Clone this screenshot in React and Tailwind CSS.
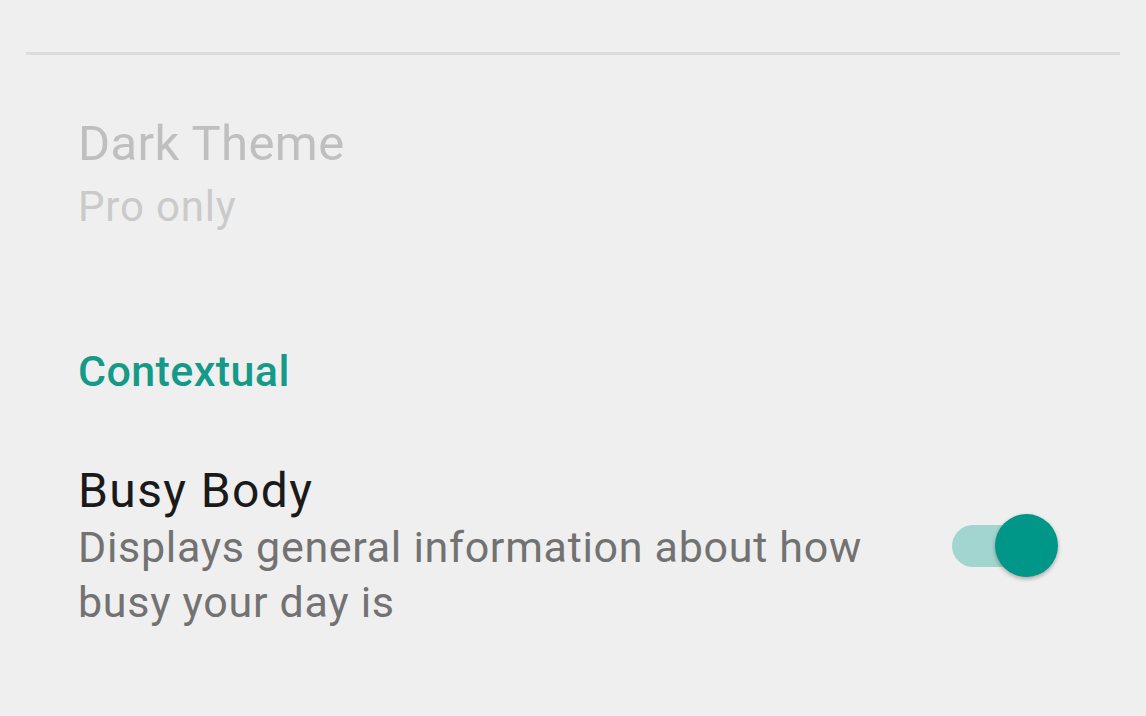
export default function App() {
    return (
        <div className="min-h-screen w-full bg-[#efefef] font-['Roboto',sans-serif] overflow-hidden">
            <div className="h-[52px]" />
            <div className="mx-[26px] h-[3px] bg-[#dcdcdc]" />

            <div className="pl-[78px] pt-[61px]">
                <div className="text-[49px] leading-[56px] tracking-[0.4px] text-[#bfbfbf]">Dark Theme</div>
                <div className="mt-[8px] text-[42px] leading-[54px] tracking-[0.8px] text-[#cacaca]">Pro only</div>
            </div>

            <div className="pl-[78px] pt-[112px]">
                <div className="text-[43px] leading-[50px] tracking-[0.4px] font-medium text-[#159a89]">Contextual</div>
            </div>

            <div className="flex items-center justify-between pl-[78px] pr-[88px] pt-[66px]">
                <div className="flex flex-col">
                    <div className="text-[48px] leading-[58px] tracking-[1.4px] text-[#1a1a1a]">Busy Body</div>
                    <div className="text-[43px] leading-[55px] tracking-[0.7px] text-[#727272]">
                        Displays general information about how
                        <br />
                        busy your day is
                    </div>
                </div>
                <div className="relative w-[108px] h-[64px] flex items-center">
                    <div className="ml-[2px] w-[90px] h-[42px] rounded-full bg-[#a3d5d0]" />
                    <div className="absolute right-0 top-0 w-[63px] h-[63px] rounded-full bg-[#009688] shadow-[0_2px_4px_rgba(0,0,0,0.3)]" />
                </div>
            </div>
        </div>
    );
}
